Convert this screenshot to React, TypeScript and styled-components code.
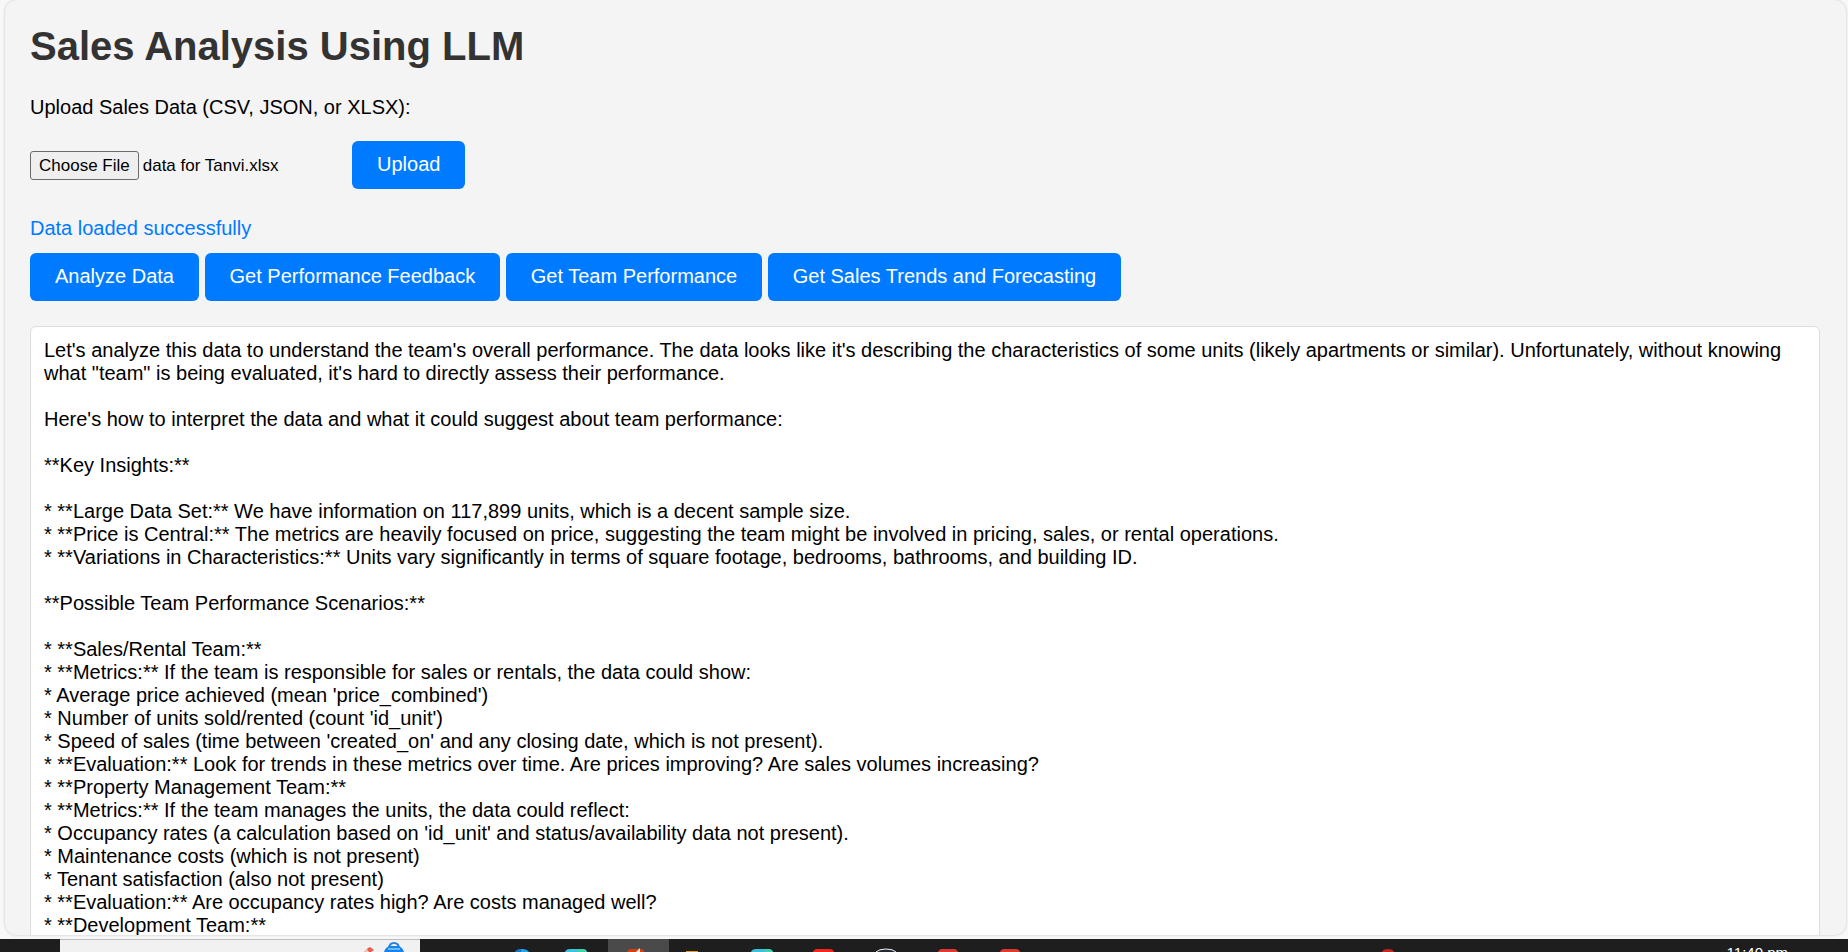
import { Fragment, useState } from "react";
import styled, { createGlobalStyle } from "styled-components";

const GlobalStyle = createGlobalStyle`
  * { box-sizing: border-box; }
  body { margin: 0; background: #f8f8f8; color: #000; font: 20px/23px "Liberation Sans", Arial, sans-serif; }
`;

const Screen = styled.div`
  display: flex;
  flex-direction: column;
  height: 100vh;
  overflow: hidden;
`;

const Page = styled.div`
  flex: 1;
  min-height: 0;
  display: flex;
  padding: 0 2px 4px 5px;
`;

const Panel = styled.main`
  flex: 1;
  min-width: 0;
  overflow: hidden;
  padding: 23px 26px 0 25px;
  background: #f4f4f4;
  border-radius: 12px;
  box-shadow: 0 0 3px rgba(0, 0, 0, 0.2);
`;

const Title = styled.h1`
  margin: 0 0 27px;
  color: #333;
  font-size: 40px;
  line-height: 46px;
`;

const UploadForm = styled.form`
  margin: 0;
`;

const UploadLabel = styled.label`
  display: block;
  margin-bottom: 22px;
`;

const UploadRow = styled.div`
  display: flex;
  align-items: center;
`;

const FilePicker = styled.label`
  display: flex;
  align-items: center;
  gap: 4px;
  width: 322px;
  font-size: 17px;
  line-height: 19px;
`;

const FileInput = styled.input`
  position: absolute;
  width: 1px;
  height: 1px;
  opacity: 0;
`;

const FileButton = styled.span`
  padding: 4px 8px;
  background: #efefef;
  border: 1px solid #6b6b6b;
  border-radius: 3px;
`;

const Button = styled.button`
  height: 48px;
  padding: 0 25px 2px;
  border: 0;
  border-radius: 6px;
  background: #007bff;
  color: #fff;
  font: inherit;
  vertical-align: top;
  cursor: pointer;
`;

const Status = styled.p`
  margin: 28px 0 13px;
  color: #007bff;
`;

const Actions = styled.div`
  min-height: 48px;
`;

const Result = styled.section`
  margin-top: 25px;
  padding: 12px 13px;
  background: #fff;
  border: 1px solid #ddd;
  border-radius: 6px;
  white-space: pre-wrap;
`;

const Taskbar = styled.footer`
  display: flex;
  height: 13px;
  overflow: hidden;
  background: #1e1e1e;
  color: #fff;
`;

const SearchField = styled.div`
  width: 360px;
  margin-left: 60px;
  background: #f1f1f1;
  border-top: 1px solid #bbb;
`;

const SearchArt = styled.svg`
  display: block;
  width: 100%;
  height: 12px;
`;

const Apps = styled.svg`
  flex: 1;
  min-width: 0;
  height: 13px;
`;

const Clock = styled.time`
  margin-right: 60px;
  padding-top: 5px;
  font-size: 15px;
  line-height: 17px;
`;

const actions = ["Analyze Data", "Get Performance Feedback", "Get Team Performance", "Get Sales Trends and Forecasting"];

const report = `Let's analyze this data to understand the team's overall performance. The data looks like it's describing the characteristics of some units (likely apartments or similar). Unfortunately, without knowing what "team" is being evaluated, it's hard to directly assess their performance.

Here's how to interpret the data and what it could suggest about team performance:

**Key Insights:**

* **Large Data Set:** We have information on 117,899 units, which is a decent sample size.
* **Price is Central:** The metrics are heavily focused on price, suggesting the team might be involved in pricing, sales, or rental operations.
* **Variations in Characteristics:** Units vary significantly in terms of square footage, bedrooms, bathrooms, and building ID.

**Possible Team Performance Scenarios:**

* **Sales/Rental Team:**
* **Metrics:** If the team is responsible for sales or rentals, the data could show:
* Average price achieved (mean 'price_combined')
* Number of units sold/rented (count 'id_unit')
* Speed of sales (time between 'created_on' and any closing date, which is not present).
* **Evaluation:** Look for trends in these metrics over time. Are prices improving? Are sales volumes increasing?
* **Property Management Team:**
* **Metrics:** If the team manages the units, the data could reflect:
* Occupancy rates (a calculation based on 'id_unit' and status/availability data not present).
* Maintenance costs (which is not present)
* Tenant satisfaction (also not present)
* **Evaluation:** Are occupancy rates high? Are costs managed well?
* **Development Team:**`;

export default function App() {
  const [fileName, setFileName] = useState("data for Tanvi.xlsx");
  return (
    <Screen>
      <GlobalStyle />
      <Page>
        <Panel>
          <Title>Sales Analysis Using LLM</Title>
          <UploadForm onSubmit={(e) => e.preventDefault()}>
            <UploadLabel htmlFor="sales-file">Upload Sales Data (CSV, JSON, or XLSX):</UploadLabel>
            <UploadRow>
              <FilePicker>
                <FileInput
                  id="sales-file"
                  type="file"
                  accept=".csv,.json,.xlsx"
                  onChange={(e) => setFileName(e.target.files?.[0]?.name ?? "No file chosen")}
                />
                <FileButton>Choose File</FileButton>
                <span>{fileName}</span>
              </FilePicker>
              <Button type="submit">Upload</Button>
            </UploadRow>
          </UploadForm>
          <Status role="status">Data loaded successfully</Status>
          <Actions>
            {actions.map((name) => (
              <Fragment key={name}>
                <Button type="button">{name}</Button>{" "}
              </Fragment>
            ))}
          </Actions>
          <Result>{report}</Result>
        </Panel>
      </Page>
      <Taskbar>
        <SearchField>
          <SearchArt viewBox="0 0 360 12" preserveAspectRatio="xMinYMin slice" aria-hidden="true">
            <path d="M304 12l4-4 2-1 4 3-3 2z" fill="#ee5a4a" />
            <path d="M304 12l3-3 2 3z" fill="#f4c4bd" />
            <path d="M329 9q0-6 5-6t5 6" fill="none" stroke="#2c7fe0" strokeWidth="2" />
            <path d="M324 12q1-4 5-6h10q4 2 5 6z" fill="#1683ef" />
            <path d="M328 9h12" stroke="#62bcff" strokeWidth="2" />
          </SearchArt>
        </SearchField>
        <Apps viewBox="0 0 1308 13" preserveAspectRatio="xMinYMin slice" aria-hidden="true">
          <path d="M188 0h61v13h-61z" fill="#4a4a4a" />
          <path d="M95 13q2-3 7-3t7 3z" fill="#22a5ec" />
          <path d="M95 13q2-3 6-3v3z" fill="#1277c4" />
          <path d="M145 13q1-3 5-3h13q3 0 4 3z" fill="#3cc4dc" />
          <path d="M158 10h5q3 0 4 3h-9z" fill="#41d2a8" />
          <path d="M207 13q1-3 4-3h10q3 0 3 3z" fill="#d63d10" />
          <path d="M216 13l4-4v4z" fill="#f6e6e0" />
          <path d="M266 12h12v1h-12z" fill="#d9a11c" />
          <path d="M331 13q1-3 5-3h12q4 0 5 3z" fill="#38c2dc" />
          <path d="M345 10h3q4 0 5 3h-8z" fill="#41d2a8" />
          <path d="M393 13q1-3 4-3h13q3 0 4 3z" fill="#f4271a" />
          <path d="M456 13q3-3 10-3t10 3" fill="#222b33" stroke="#f2f2f2" strokeWidth="1" />
          <path d="M518 13q1-3 4-3h12q3 0 4 3z" fill="#e0392f" />
          <path d="M580 13q1-3 4-3h12q3 0 4 3z" fill="#e0392f" />
          <path d="M962 13q1-3 6-3t6 3z" fill="#c8281e" />
        </Apps>
        <Clock>11:40 pm</Clock>
      </Taskbar>
    </Screen>
  );
}
